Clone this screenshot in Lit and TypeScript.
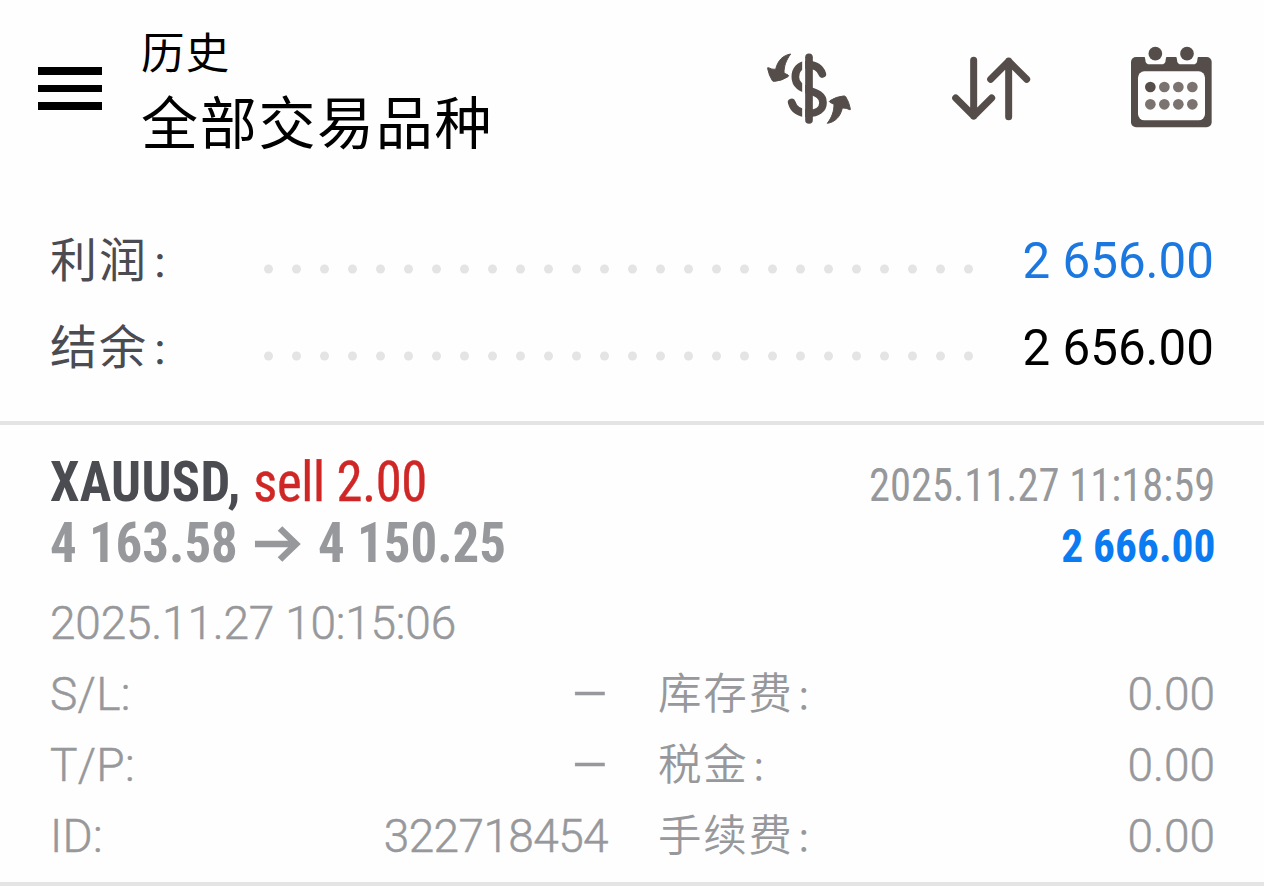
import { LitElement, html, css, svg } from "lit";
import { customElement, property } from "lit/decorators.js";

const DOTS = Array.from({ length: 26 }, (_, i) => 5.5 + i * 28);

@customElement("history-header")
export class HistoryHeader extends LitElement {
  static styles = css`
    :host {
      display: flex;
      height: 217px;
      color: #000;
    }

    .menu {
      display: flex;
      flex-direction: column;
      gap: 10px;
      margin: 67px 0 0 38px;
      width: 64px;
    }

    .menu span {
      height: 7.5px;
      background: #000;
    }

    .titles {
      margin: 25px auto 0 39px;
      white-space: nowrap;
      font-weight: 370;
    }

    .title {
      font-size: 43.5px;
      line-height: 60px;
      letter-spacing: 1.2px;
    }

    .subtitle {
      font-size: 57px;
      line-height: 80px;
      letter-spacing: 1.7px;
    }

    .actions {
      display: flex;
      align-items: flex-start;
      padding-top: 30px;
      margin-right: 39px;
      gap: 70px;
      color: #554d4a;
    }

    .swap {
      margin-right: -5px;
    }

    svg {
      display: block;
    }
  `;

  render() {
    const arrow = svg`<path
      d="M122 72C99 76 83 91 77 118Q65 119 55 113Q52 112 53 116Q57 137 67 152Q70 155 74 154Q96 152 114 140Q118 137 114 135L102 129C102 108 108 91 122 72Z" />`;

    return html`
      <div class="menu"><span></span><span></span><span></span></div>
      <div class="titles">
        <div class="title">历史</div>
        <div class="subtitle">全部交易品种</div>
      </div>
      <div class="actions">
        <svg class="swap" width="120" height="110" viewBox="0 0 360 330">
          <path
            d="M217 132C210 112 192 104 172 104C149 104 136 120 136 141C136 165 154 174 176 181C202 189 219 197 219 218C219 238 202 250 176 250C149 250 131 238 125 217"
            fill="none"
            stroke="currentColor"
            stroke-width="23"
            stroke-linecap="round"
          />
          <path d="M161 60V290" stroke="#fefefe" stroke-width="9" />
          <path
            d="M177 82V270"
            stroke="currentColor"
            stroke-width="23"
            stroke-linecap="round"
          />
          <g fill="currentColor" stroke="currentColor" stroke-width="3" stroke-linejoin="round">
            ${arrow}
            <g transform="rotate(180 177 176)">${arrow}</g>
          </g>
        </svg>
        <svg width="110" height="110" viewBox="0 -15 330 330">
          <path
            d="M116 76V243M62 189L116 243L170 189M221 245V78M167 133L221 79L275 133"
            fill="none"
            stroke="currentColor"
            stroke-width="21"
            stroke-linecap="round"
            stroke-linejoin="round"
          />
        </svg>
        <svg width="110" height="110" viewBox="0 -15 330 330">
          <rect x="48" y="66" width="242" height="211" rx="15" fill="currentColor" />
          <path
            d="M86 64Q91 67 91 74Q91 88 105 88H138Q152 88 152 74Q152 67 157 64ZM181 64Q186 67 186 74Q186 88 200 88H233Q247 88 247 74Q247 67 252 64Z"
            fill="#fefefe"
          />
          <rect x="69" y="109" width="201" height="147" rx="19" fill="#fefefe" />
          <circle cx="121" cy="56" r="20.5" fill="currentColor" />
          <circle cx="216" cy="56" r="20.5" fill="currentColor" />
          ${[156, 208].map((y) =>
            [106, 148, 190, 232].map(
              (x) => svg`<circle cx=${x} cy=${y} r="16"
                fill=${x === 106 && y === 156 ? "#554d4a" : "#7b736f"} />`
            )
          )}
        </svg>
      </div>
    `;
  }
}

@customElement("summary-row")
export class SummaryRow extends LitElement {
  @property() label = "";
  @property() value = "";

  static styles = css`
    :host {
      display: flex;
      align-items: center;
      height: 87px;
      padding: 0 50px;
      font-size: 49.3px;
      white-space: nowrap;
    }

    .label {
      width: 213px;
      margin-bottom: 8px;
      color: #4b4b52;
      font-size: 47px;
      font-weight: 370;
      letter-spacing: 2px;
    }

    .colon {
      font-size: 0.76em;
      margin-left: 3px;
    }

    .dots {
      display: block;
      margin-top: 16px;
      fill: #e4e4e4;
    }

    .value {
      margin-left: auto;
    }
  `;

  render() {
    return html`
      <span class="label">${this.label}<span class="colon">：</span></span>
      <svg class="dots" width="712" height="10">
        ${DOTS.map((x) => svg`<circle cx=${x} cy="5" r="4.5" />`)}
      </svg>
      <span class="value">${this.value}</span>
    `;
  }
}

@customElement("deal-card")
export class DealCard extends LitElement {
  static styles = css`
    :host {
      display: block;
      padding: 27px 49px 0 50px;
      border-top: 4px solid #e4e4e4;
      border-bottom: 4px solid #e4e4e4;
      height: 430px;
      color: #97989b;
      white-space: nowrap;
    }

    .line {
      display: flex;
      justify-content: space-between;
      height: 61px;
      line-height: 61px;
      font-stretch: 75%;
    }

    .name {
      font-size: 56px;
      font-weight: 700;
      letter-spacing: 0.35px;
      color: #4b4b52;
      transform: scaleX(0.94);
      transform-origin: left;
    }

    .side {
      font-weight: 400;
      letter-spacing: -0.35px;
      color: #cf2626;
      -webkit-text-stroke: 0.4px currentColor;
    }

    .prices {
      display: flex;
      align-items: center;
      gap: 18px;
      font-size: 56px;
      font-weight: 700;
      transform: scaleX(0.944);
      transform-origin: left;
    }

    .closed {
      font-size: 46px;
      padding-top: 3px;
      transform: scaleX(0.925);
      transform-origin: right;
    }

    .profit {
      font-size: 46px;
      font-weight: 700;
      color: #0a7bf0;
      padding-top: 3px;
      transform: scaleX(0.944);
      transform-origin: right;
    }

    .opened {
      height: 86px;
      line-height: 98px;
      font-size: 46px;
      font-weight: 300;
      letter-spacing: -0.2px;
      -webkit-text-stroke: 0.5px currentColor;
    }

    .details {
      display: grid;
      grid-template-columns: 558px 557px;
      column-gap: 50px;
      grid-auto-rows: 71px;
      line-height: 69px;
      font-size: 46px;
      font-weight: 300;
      -webkit-text-stroke: 0.5px currentColor;
    }

    .cell {
      display: flex;
      justify-content: space-between;
    }

    .key {
      letter-spacing: 0.3px;
    }

    .cjk {
      font-size: 43.5px;
      font-weight: 360;
      letter-spacing: 1.7px;
      -webkit-text-stroke: 0;
    }

    .colon {
      font-size: 0.76em;
      margin-left: 2px;
    }

    .dash {
      font-size: 60px;
      line-height: 70px;
      margin-right: -1.5px;
    }

    .ticket {
      letter-spacing: -0.6px;
    }
  `;

  render() {
    return html`
      <div class="line">
        <span class="name">XAUUSD, <span class="side">sell 2.00</span></span>
        <span class="closed">2025.11.27 11:18:59</span>
      </div>
      <div class="line">
        <span class="prices">
          <span>4 163.58</span>
          <svg width="49" height="36" viewBox="0 0 46 36" preserveAspectRatio="none">
            <path
              d="M0 18H41M25 2.5L41 18L25 33.5"
              fill="none"
              stroke="currentColor"
              stroke-width="6.5"
            />
          </svg>
          <span>4 150.25</span>
        </span>
        <span class="profit">2 666.00</span>
      </div>
      <div class="opened">2025.11.27 10:15:06</div>
      <div class="details">
        <div class="cell"><span class="key">S/L:</span><span class="dash">–</span></div>
        ${this.fee("库存费")}
        <div class="cell"><span class="key">T/P:</span><span class="dash">–</span></div>
        ${this.fee("税金")}
        <div class="cell"><span class="key">ID:</span><span class="ticket">322718454</span></div>
        ${this.fee("手续费")}
      </div>
    `;
  }

  private fee(label: string) {
    return html`<div class="cell">
      <span class="cjk">${label}<span class="colon">：</span></span>
      <span>0.00</span>
    </div>`;
  }
}

@customElement("app-root")
export class AppRoot extends LitElement {
  static styles = css`
    :host {
      display: block;
      height: 886px;
      overflow: hidden;
      background: #fefefe;
      font-family: Roboto, "Noto Sans CJK SC", sans-serif;
    }

    .summary {
      height: 204px;
    }

    .profit {
      color: #1a78e0;
    }

    .balance {
      color: #000;
    }
  `;

  render() {
    return html`
      <history-header></history-header>
      <div class="summary">
        <summary-row class="profit" label="利润" value="2 656.00"></summary-row>
        <summary-row class="balance" label="结余" value="2 656.00"></summary-row>
      </div>
      <deal-card></deal-card>
    `;
  }
}
